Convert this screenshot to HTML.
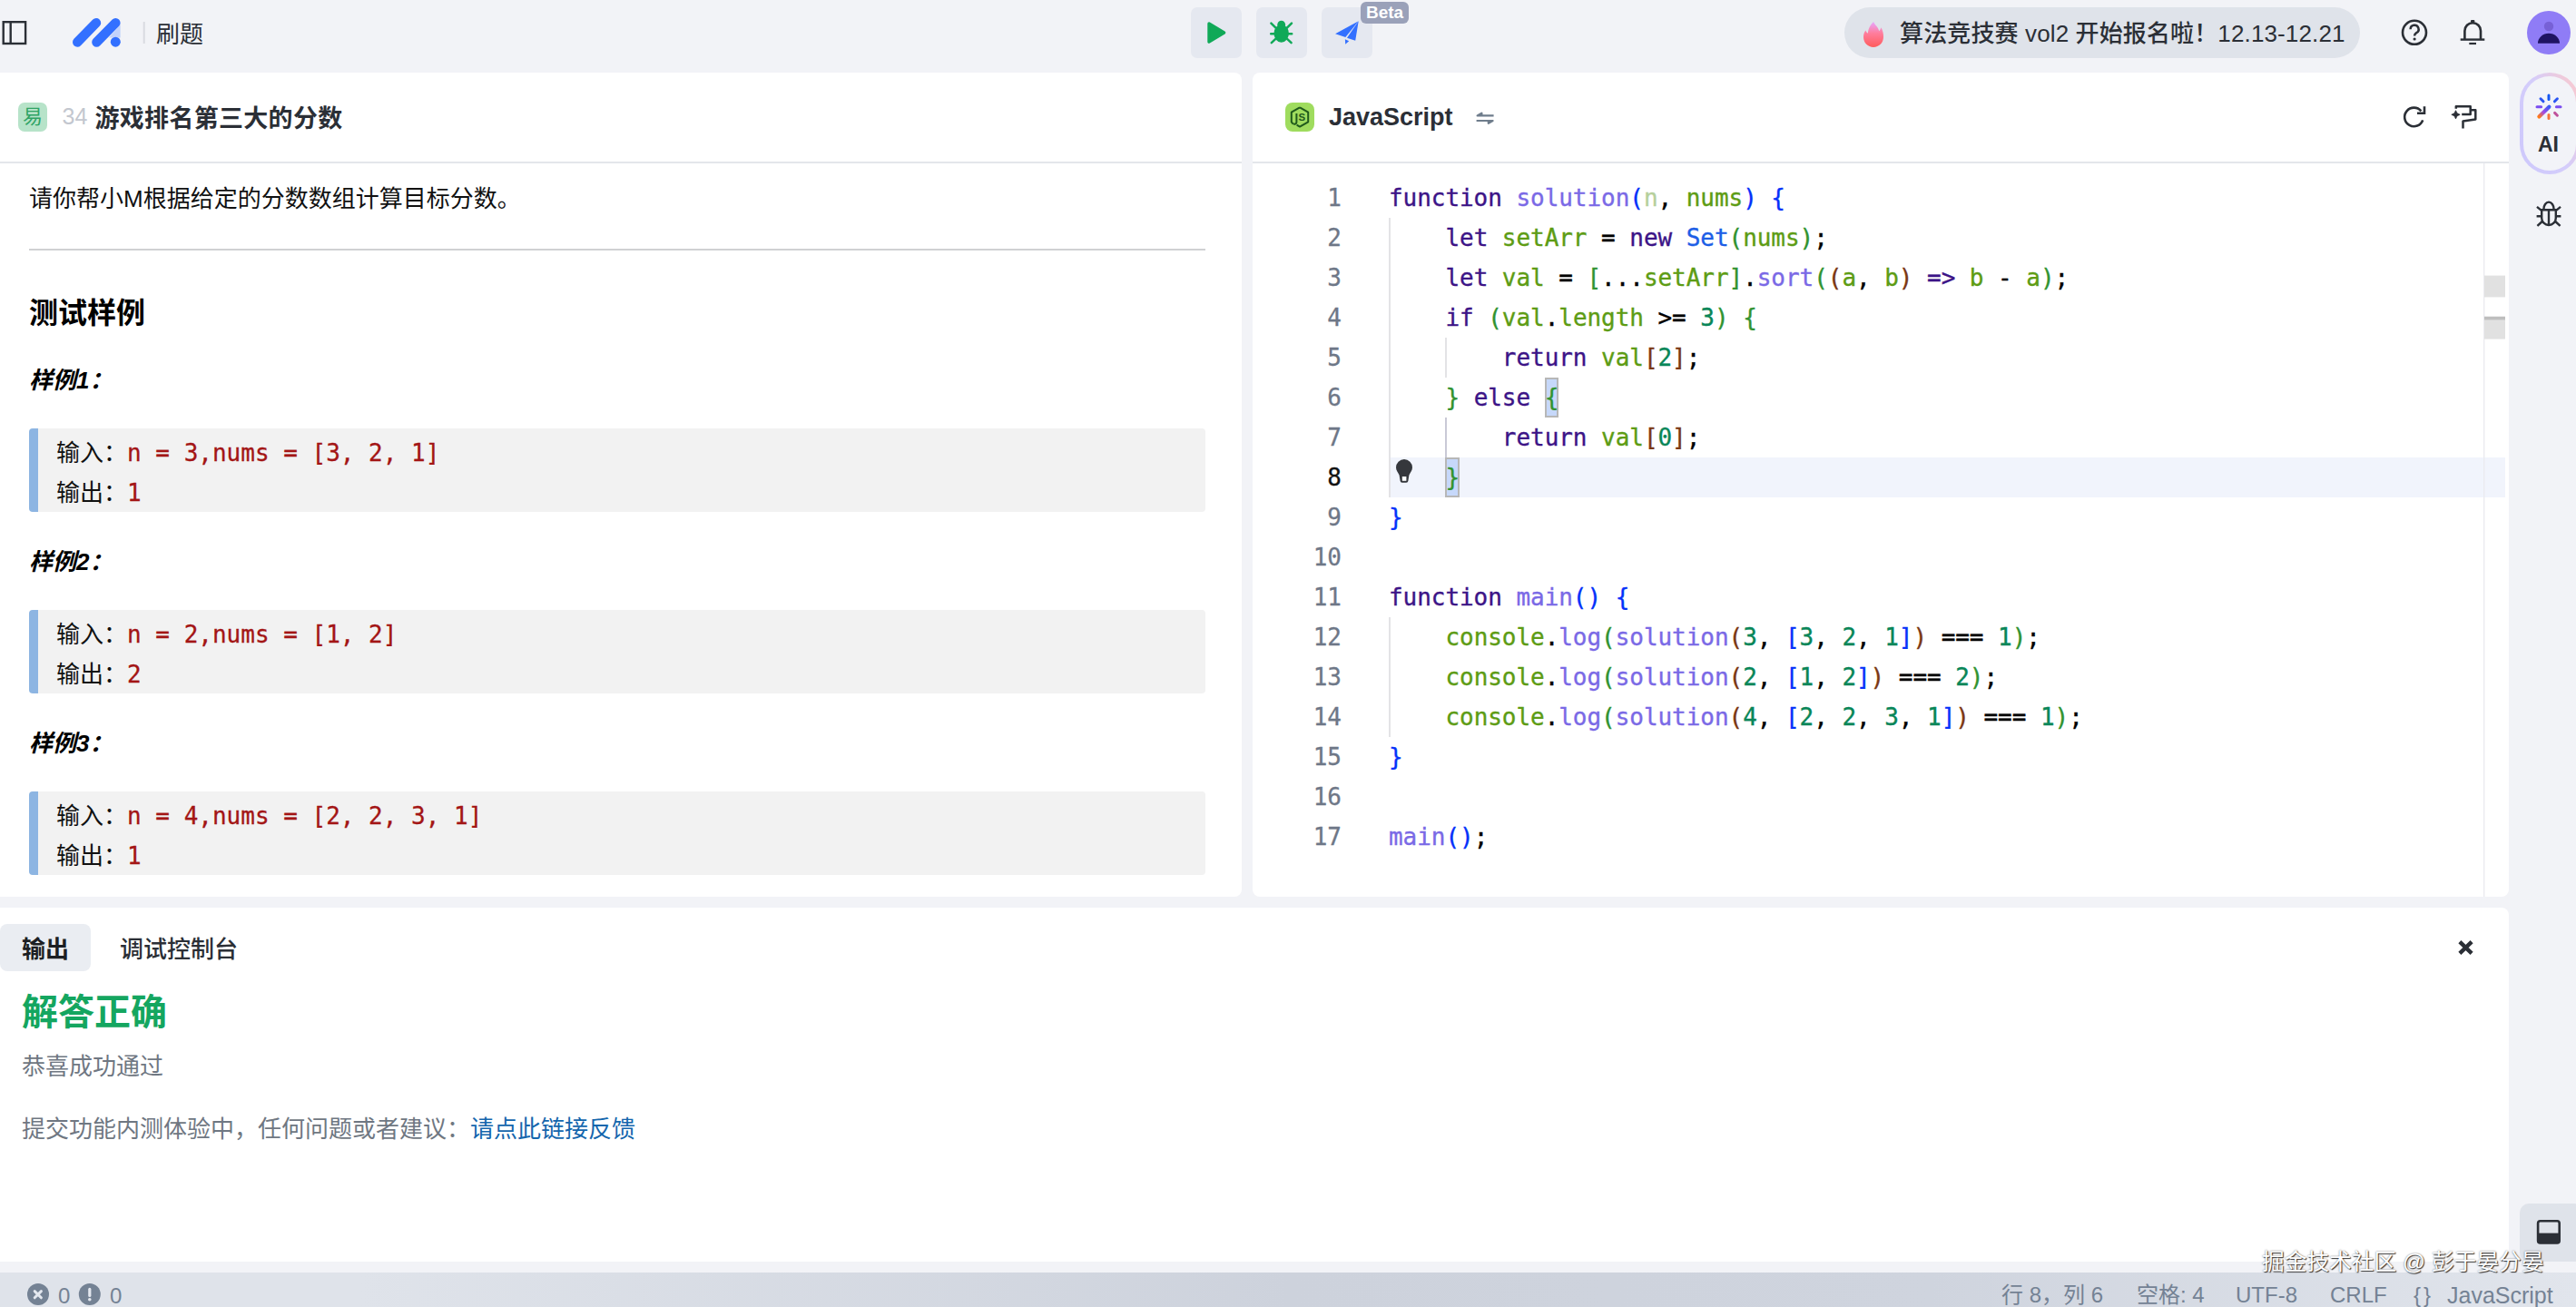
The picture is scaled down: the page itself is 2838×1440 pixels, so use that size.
<!DOCTYPE html>
<html lang="zh-CN">
<head>
<meta charset="utf-8">
<title>刷题 - 游戏排名第三大的分数</title>
<style>
*{box-sizing:border-box;margin:0;padding:0}
html,body{width:2838px;height:1440px;overflow:hidden}
body{position:relative;background:#f2f3f7;color:#2b2f36;font-family:"Liberation Sans","Noto Sans CJK SC",sans-serif;font-size:26px}
.abs{position:absolute}
.panel{position:absolute;background:#fff;border-radius:8px;overflow:hidden}
svg{display:block;position:absolute;overflow:visible}
/* top bar */
#top{position:absolute;left:0;top:0;width:2838px;height:80px}
.tbtn{position:absolute;top:8px;width:56px;height:56px;border-radius:7px;background:#e5e8f0}
#pill{position:absolute;left:2032px;top:8px;width:568px;height:56px;border-radius:28px;background:#dfe3ea}
#pilltxt{position:absolute;left:61px;top:1px;letter-spacing:0.13px;line-height:56px;font-size:26px;font-weight:500;white-space:nowrap;color:#2b2f36}
#beta{position:absolute;left:1499px;top:2px;width:53px;height:24px;border-radius:6px;background:#9aa1b9;color:#fff;font-weight:bold;font-size:19px;line-height:24px;text-align:center}
/* left panel */
#left{left:0;top:80px;width:1368px;height:908px;border-radius:0 8px 8px 0}
.hdrline{position:absolute;left:0;right:0;top:98px;height:2px;background:#e4e6eb}
#badge{position:absolute;left:20px;top:33px;width:32px;height:32px;border-radius:7px;background:#b7e3c9;color:#2fa365;font-size:22px;line-height:32px;text-align:center}
#pnum{position:absolute;left:68.5px;top:28px;font-size:25px;line-height:40px;color:#c3c7cf}
#ptitle{position:absolute;left:104.5px;top:31px;font-size:27px;line-height:40px;font-weight:bold;color:#2b2f36;white-space:nowrap;letter-spacing:0.3px}
#desc{position:absolute;left:32px;top:119px;font-size:26px;line-height:40px;color:#111;white-space:nowrap}
#hr{position:absolute;left:32px;top:194px;width:1296px;height:2px;background:#d0d1d3}
#h2{position:absolute;left:32px;top:241px;font-size:32px;line-height:48px;font-weight:bold;color:#000;white-space:nowrap}
.ex{position:absolute;left:32px;font-size:26px;line-height:40px;font-weight:bold;font-style:italic;color:#000;white-space:nowrap}
.pre{position:absolute;left:32px;width:1296px;height:92px;background:#f2f2f2;border-left:10px solid #8db5e2;border-radius:4px;padding:5px 0 0 20px;font-family:"DejaVu Sans Mono","Noto Sans CJK SC",monospace;font-size:26px;line-height:44px;color:#a31515;white-space:pre;-webkit-text-stroke:0.3px}
.pre i{font-style:normal;color:#111;-webkit-text-stroke:0}
/* right panel */
#right{left:1380px;top:80px;width:1384px;height:908px}
#jsic{position:absolute;left:36px;top:33px;width:32px;height:32px;border-radius:8px;background:#9fdc5e}
#lang{position:absolute;left:84px;top:29px;font-size:27px;line-height:40px;font-weight:bold;color:#2b2f36}
#code{position:absolute;left:0;top:116px;width:1384px;font-family:"DejaVu Sans Mono","Liberation Mono",monospace;font-size:26px;line-height:44px;white-space:pre;color:#000}
.ln{position:absolute;left:0;width:98px;text-align:right;color:#6e7787;height:44px;-webkit-text-stroke:0.3px}
.cl{position:absolute;left:150px;height:44px;letter-spacing:-0.05px;-webkit-text-stroke:0.35px}
.k{color:#3c1487}.f{color:#7a69e6}.v{color:#5d9c14}.t{color:#1c5ee6}.n{color:#098658}
.b1{color:#0431fa}.b2{color:#319331}.b3{color:#7b3814}.u{color:#b6d09c}
.bm{display:inline-block;height:44px;vertical-align:top;background:#c6d8fa;box-shadow:inset 0 0 0 2px #b7b7b7}
.guide{position:absolute;width:2px;background:#e3e3e6}
/* bottom panel */
#bottom{left:0;top:1000px;width:2764px;height:390px;border-radius:0 8px 8px 0}
#tab1{position:absolute;left:0;top:18px;padding-top:2px;width:100px;height:52px;border-radius:8px;background:#eaedf2;font-size:26px;line-height:52px;font-weight:bold;color:#1c1f23;text-align:center}
#tab2{position:absolute;left:132px;top:20px;height:52px;font-size:26px;line-height:52px;font-weight:500;color:#2b2f36;white-space:nowrap}
#ok{position:absolute;left:24px;top:85px;font-size:40px;line-height:60px;font-weight:bold;color:#14a660;white-space:nowrap}
#ok2{position:absolute;left:24px;top:155px;font-size:26px;line-height:40px;color:#6f7782;white-space:nowrap}
#ok3{position:absolute;left:24px;top:224px;font-size:26px;line-height:40px;color:#6f7782;white-space:nowrap}
#ok3 a{color:#1466ad;text-decoration:none}
/* status */
#status{position:absolute;left:0;top:1402px;width:2838px;height:38px;background:linear-gradient(90deg,#dfe3ea 0%,#dfe3ea 14%,#cdd2dc 50%,#cfd4de 75%,#e1e5ec 100%);color:#748294;font-size:24px}
#status span{position:absolute;top:7px;line-height:36px;white-space:nowrap}
#wm{position:absolute;left:2492px;top:1373px;font-size:24.7px;line-height:36px;color:#fff;white-space:nowrap;text-shadow:1px 1px 1px rgba(0,0,0,.75),0 0 2px rgba(0,0,0,.55)}
/* right sidebar */
#aipill{position:absolute;left:2776px;top:80px;width:66px;height:112px;border-radius:33px;background:linear-gradient(68deg,#cdc8fc 0%,#d4cdfb 50%,#f4cad5 88%,#f7c8d0 100%)}
#aipill:before{content:"";position:absolute;left:4px;top:4px;right:4px;bottom:4px;border-radius:29px;background:#f2f3f8}
#aitxt{position:absolute;left:2776px;top:146px;width:63px;text-align:center;font-size:23px;line-height:26px;font-weight:bold;color:#2b2f36}
#dock{position:absolute;left:2776px;top:1326px;width:70px;height:64px;border-radius:10px;background:#dfe3ea}
</style>
</head>
<body>
<!-- TOPBAR -->
<div id="top">
<svg width="2838" height="80" viewBox="0 0 2838 80" style="left:0;top:0;z-index:2">
  <defs>
    <linearGradient id="gflame" x1="0" y1="0" x2="0" y2="1"><stop offset="0" stop-color="#e7a6ff"/><stop offset="0.45" stop-color="#ff7d9c"/><stop offset="1" stop-color="#ff5c5c"/></linearGradient>
  </defs>
  <!-- sidebar toggle -->
  <rect x="3.7" y="24.2" width="24.4" height="23.8" fill="none" stroke="#2b2f36" stroke-width="2.4"/>
  <line x1="11.7" y1="24" x2="11.7" y2="48" stroke="#2b2f36" stroke-width="2.4"/>
  <!-- logo -->
  <polygon points="132.6,27 132.6,41.5 120,41.5" fill="#c2d2fb"/>
  <line x1="85.2" y1="46.5" x2="106" y2="25.2" stroke="#3370ff" stroke-width="10.4" stroke-linecap="round"/>
  <line x1="106.4" y1="46.5" x2="127.4" y2="25.2" stroke="#3370ff" stroke-width="10.4" stroke-linecap="round"/>
  <circle cx="127.3" cy="46.2" r="5.5" fill="#3370ff"/>
  <rect x="157.7" y="24" width="2" height="24" fill="#d9dbe1"/>
  <!-- play -->
  <path d="M1332,26 L1348.6,36 L1332,46 Z" fill="#10a958" stroke="#10a958" stroke-width="3.4" stroke-linejoin="round" transform="translate(0,0)"/>
  <!-- bug -->
  <g fill="#10a958" stroke="#10a958" stroke-width="2.5" stroke-linecap="round">
    <ellipse cx="1411.7" cy="36.8" rx="7" ry="8.6" />
    <circle cx="1411.7" cy="27.2" r="4.4" stroke="none"/>
    <path d="M1400.4,25.6 L1406,31.2 M1423,25.6 L1417.4,31.2 M1400.2,37.2 H1405 M1423.2,37.2 H1418.4 M1400.8,47.2 L1405.6,42.6 M1422.6,47.2 L1417.8,42.6" fill="none"/>
  </g>
  <!-- send -->
  <g fill="#3370ff">
    <path d="M1496.7,23.3 L1471.1,37.3 L1482.3,41.1 Z"/>
    <path d="M1496.7,23.3 L1493.2,44.8 L1484,41.8 Z"/>
    <path d="M1481.9,43.3 L1486.2,45.2 L1482.2,48.7 Z"/>
  </g>
  <!-- flame -->
  <g transform="translate(2053,24)">
    <path d="M11,0 C12.5,3.5 16.5,6 17.2,10.2 C18.4,9 19,7.6 19.4,6.2 C21.4,9.6 22,13 22,16.8 C22,23.3 17,28 11,28 C5,28 0,23.3 0,16.8 C0,13.8 0.9,11.4 2.4,9.4 C3,11 3.8,12 5,12.6 C5,7.6 8,3 11,0 Z" fill="url(#gflame)"/>
  </g>
  <!-- help -->
  <circle cx="2660" cy="35.8" r="13" fill="none" stroke="#2b2f36" stroke-width="2.6"/>
  <path d="M2655.6,32.2 a4.5,4.5 0 1 1 6.6,4 c-1.6,0.9 -2.1,1.7 -2.1,3.4" fill="none" stroke="#2b2f36" stroke-width="2.5"/>
  <circle cx="2660.1" cy="43" r="1.6" fill="#2b2f36"/>
  <!-- bell -->
  <path d="M2715.4,43.6 V34 a8.8,8.8 0 0 1 17.6,0 V43.6" fill="none" stroke="#2b2f36" stroke-width="2.6"/>
  <line x1="2710.7" y1="43.6" x2="2737.3" y2="43.6" stroke="#2b2f36" stroke-width="2.4"/>
  <line x1="2720.3" y1="48" x2="2728" y2="48" stroke="#2b2f36" stroke-width="2.2"/>
  <rect x="2722" y="22" width="4.4" height="3" rx="1" fill="#2b2f36"/>
  <!-- avatar -->
  <circle cx="2808" cy="36" r="24" fill="#8f7cf6"/>
  <circle cx="2808" cy="29" r="5.2" fill="#7761d6"/>
  <path d="M2796,47.8 a12,11 0 0 1 24,0 Z" fill="#1f1463"/>
</svg>
<div class="abs" style="left:172px;top:18px;font-size:26px;line-height:40px;color:#2b2f36;white-space:nowrap">刷题</div>
<div class="tbtn" style="left:1312px"></div>
<div class="tbtn" style="left:1384px"></div>
<div class="tbtn" style="left:1456px"></div>
<div id="pill"><div id="pilltxt">算法竞技赛 vol2 开始报名啦！12.13-12.21</div></div>
<div id="beta">Beta</div>
</div>
<!-- LEFT -->
<div class="panel" id="left">
<div id="badge">易</div>
<div id="pnum">34</div>
<div id="ptitle">游戏排名第三大的分数</div>
<div class="hdrline"></div>
<div id="desc">请你帮小M根据给定的分数数组计算目标分数。</div>
<div id="hr"></div>
<div id="h2">测试样例</div>
<div class="ex" style="top:319px">样例1：</div>
<div class="pre" style="top:392px"><i>输入：</i>n = 3,nums = [3, 2, 1]
<i>输出：</i>1</div>
<div class="ex" style="top:519px">样例2：</div>
<div class="pre" style="top:592px"><i>输入：</i>n = 2,nums = [1, 2]
<i>输出：</i>2</div>
<div class="ex" style="top:719px">样例3：</div>
<div class="pre" style="top:792px"><i>输入：</i>n = 4,nums = [2, 2, 3, 1]
<i>输出：</i>1</div>
</div>
<!-- RIGHT -->
<div class="panel" id="right">
<div id="jsic"></div>
<svg width="1384" height="908" viewBox="1380 80 1384 908" style="left:0;top:0;z-index:3">
  <!-- node/js icon -->
  <g fill="none" stroke="#1f5a1c" stroke-width="2" stroke-linejoin="round">
    <path d="M1432,118.4 L1441.2,123.7 V134.3 L1432,139.6 L1428.6,137.6 M1424.6,136.6 L1422.8,134.3 V123.7 L1432,118.4"/>
    <path d="M1428.4,125 V134.6 a2.2,2.2 0 0 1 -3.6,1.6"/>
  </g>
  <text x="1430.4" y="133.2" font-family="Liberation Sans, sans-serif" font-size="11.5" font-weight="bold" fill="#1f5a1c">S</text>
  <!-- swap -->
  <g fill="none" stroke="#6f7d8c" stroke-width="2.2">
    <path d="M1645.6,127.4 H1627.6 L1632.4,124.6 V127.4" fill="#6f7d8c" stroke-linejoin="round"/>
    <path d="M1626.6,133 H1644.6 L1639.8,135.8 V133" fill="#6f7d8c" stroke-linejoin="round"/>
  </g>
  <!-- refresh -->
  <g fill="none" stroke="#2b2f36" stroke-width="2.6">
    <path d="M2669.2,132.3 A10.3,10.3 0 1 1 2667.4,122.4"/>
    <path d="M2671,117.2 V124.7 H2663"/>
  </g>
  <!-- format -->
  <g fill="none" stroke="#2b2f36" stroke-width="2.5" stroke-linejoin="round">
    <path d="M2705.8,119.8 V117.3 H2721.7 V125.9 H2712.2"/>
    <path d="M2722,121.2 H2727.3 V131.4 L2713.5,133.6 V141.6"/>
    <path d="M2705.5,121.7 L2707,124.8 L2710.2,126.3 L2707,127.8 L2705.5,130.9 L2704,127.8 L2700.8,126.3 L2704,124.8 Z" fill="#2b2f36" stroke-width="0.8"/>
  </g>
  <!-- lightbulb -->
  <path d="M1547,506 a9,9 0 0 1 9,9 c0,3.6 -2.4,5.6 -3.6,8.6 l-1,6.2 a2.2,2.2 0 0 1 -2.2,2 h-4.4 a2.2,2.2 0 0 1 -2.2,-2 l-1,-6.2 c-1.2,-3 -3.600,-5 -3.600,-8.600 a9,9 0 0 1 9,-9 Z" fill="#35373c"/>
  <rect x="1544.8" y="525" width="4.6" height="4.8" fill="#fff"/>
  <!-- overview ruler -->
  <rect x="2736" y="180" width="1.4" height="808" fill="#ebebf0"/>
  <rect x="2737" y="303.6" width="23" height="23.8" fill="#e1e1e1"/>
  <rect x="2737" y="348.8" width="23" height="24.8" fill="#e1e1e1"/>
  <rect x="2737" y="348.8" width="23" height="3.6" fill="#bebebe"/>
</svg>
<div id="lang">JavaScript</div>
<div class="hdrline"></div>
<div id="code">
<div class="abs" style="left:150px;top:308px;width:1230px;height:44px;background:#f1f4fc"></div>
<div class="guide" style="left:150px;top:44px;height:308px"></div>
<div class="guide" style="left:212px;top:176px;height:44px"></div>
<div class="guide" style="left:212px;top:264px;height:44px;background:#c9c9d6"></div>
<div class="guide" style="left:150px;top:484px;height:132px"></div>
<div class="ln" style="top:0px">1</div><div class="cl" style="top:0px"><span class="k">function</span> <span class="f">solution</span><span class="b1">(</span><span class="u">n</span>, <span class="v">nums</span><span class="b1">)</span> <span class="b1">{</span></div>
<div class="ln" style="top:44px">2</div><div class="cl" style="top:44px">    <span class="k">let</span> <span class="v">setArr</span> = <span class="k">new</span> <span class="t">Set</span><span class="b2">(</span><span class="v">nums</span><span class="b2">)</span>;</div>
<div class="ln" style="top:88px">3</div><div class="cl" style="top:88px">    <span class="k">let</span> <span class="v">val</span> = <span class="b2">[</span>...<span class="v">setArr</span><span class="b2">]</span>.<span class="f">sort</span><span class="b2">(</span><span class="b3">(</span><span class="v">a</span>, <span class="v">b</span><span class="b3">)</span> <span class="k">=&gt;</span> <span class="v">b</span> - <span class="v">a</span><span class="b2">)</span>;</div>
<div class="ln" style="top:132px">4</div><div class="cl" style="top:132px">    <span class="k">if</span> <span class="b2">(</span><span class="v">val</span>.<span class="v">length</span> &gt;= <span class="n">3</span><span class="b2">)</span> <span class="b2">{</span></div>
<div class="ln" style="top:176px">5</div><div class="cl" style="top:176px">        <span class="k">return</span> <span class="v">val</span><span class="b3">[</span><span class="n">2</span><span class="b3">]</span>;</div>
<div class="ln" style="top:220px">6</div><div class="cl" style="top:220px">    <span class="b2">}</span> <span class="k">else</span> <span class="b2 bm">{</span></div>
<div class="ln" style="top:264px">7</div><div class="cl" style="top:264px">        <span class="k">return</span> <span class="v">val</span><span class="b3">[</span><span class="n">0</span><span class="b3">]</span>;</div>
<div class="ln" style="top:308px;color:#111">8</div><div class="cl" style="top:308px">    <span class="b2 bm">}</span></div>
<div class="ln" style="top:352px">9</div><div class="cl" style="top:352px"><span class="b1">}</span></div>
<div class="ln" style="top:396px">10</div><div class="cl" style="top:396px"></div>
<div class="ln" style="top:440px">11</div><div class="cl" style="top:440px"><span class="k">function</span> <span class="f">main</span><span class="b1">()</span> <span class="b1">{</span></div>
<div class="ln" style="top:484px">12</div><div class="cl" style="top:484px">    <span class="v">console</span>.<span class="f">log</span><span class="b2">(</span><span class="f">solution</span><span class="b3">(</span><span class="n">3</span>, <span class="b1">[</span><span class="n">3</span>, <span class="n">2</span>, <span class="n">1</span><span class="b1">]</span><span class="b3">)</span> === <span class="n">1</span><span class="b2">)</span>;</div>
<div class="ln" style="top:528px">13</div><div class="cl" style="top:528px">    <span class="v">console</span>.<span class="f">log</span><span class="b2">(</span><span class="f">solution</span><span class="b3">(</span><span class="n">2</span>, <span class="b1">[</span><span class="n">1</span>, <span class="n">2</span><span class="b1">]</span><span class="b3">)</span> === <span class="n">2</span><span class="b2">)</span>;</div>
<div class="ln" style="top:572px">14</div><div class="cl" style="top:572px">    <span class="v">console</span>.<span class="f">log</span><span class="b2">(</span><span class="f">solution</span><span class="b3">(</span><span class="n">4</span>, <span class="b1">[</span><span class="n">2</span>, <span class="n">2</span>, <span class="n">3</span>, <span class="n">1</span><span class="b1">]</span><span class="b3">)</span> === <span class="n">1</span><span class="b2">)</span>;</div>
<div class="ln" style="top:616px">15</div><div class="cl" style="top:616px"><span class="b1">}</span></div>
<div class="ln" style="top:660px">16</div><div class="cl" style="top:660px"></div>
<div class="ln" style="top:704px">17</div><div class="cl" style="top:704px"><span class="f">main</span><span class="b1">()</span>;</div>
</div>
</div>
<!-- BOTTOM -->
<div class="panel" id="bottom">
<div id="tab1">输出</div>
<div id="tab2">调试控制台</div>
<div id="ok">解答正确</div>
<div id="ok2">恭喜成功通过</div>
<div id="ok3">提交功能内测体验中，任何问题或者建议：<a>请点此链接反馈</a></div>
</div>
<!-- STATUS -->
<div id="status">
<span style="left:64px;top:8px">0</span><span style="left:121px;top:8px">0</span>
<span style="left:2205px">行 8，列 6</span><span style="left:2354px">空格: 4</span><span style="left:2463px">UTF-8</span><span style="left:2567px">CRLF</span><span style="left:2659px;letter-spacing:3px">{}</span><span style="left:2696px;font-size:25px">JavaScript</span>
</div>
<!-- SIDEBAR -->
<div id="aipill"></div>
<div id="aitxt">AI</div>
<div id="dock"></div>
<svg width="2838" height="1440" viewBox="0 0 2838 1440" style="left:0;top:0;z-index:5;pointer-events:none">
  <defs>
    <linearGradient id="gwand" x1="0" y1="1" x2="1" y2="0"><stop offset="0" stop-color="#ff7a1a"/><stop offset="0.45" stop-color="#a04be8"/><stop offset="1" stop-color="#3b5cf5"/></linearGradient>
  </defs>
  <!-- ai sparkle -->
  <g fill="none" stroke-width="3" stroke-linecap="round">
    <line x1="2808" y1="105" x2="2808" y2="109.6" stroke="#1557f0"/>
    <line x1="2799" y1="108.8" x2="2802" y2="111.8" stroke="#2a55f2"/>
    <line x1="2817.4" y1="108.8" x2="2814.4" y2="111.8" stroke="#2a55f2"/>
    <line x1="2795" y1="117.8" x2="2799.600" y2="117.8" stroke="#7a4df0"/>
    <line x1="2816.4" y1="117.800" x2="2821" y2="117.8" stroke="#7a4df0"/>
    <line x1="2814.6" y1="124.4" x2="2817.4" y2="127.2" stroke="#c0509a"/>
    <line x1="2808" y1="126.4" x2="2808" y2="130.6" stroke="#f5743a"/>
    <line x1="2797.4" y1="128.600" x2="2808.4" y2="117.800" stroke="url(#gwand)" stroke-width="4.2"/>
  </g>
  <!-- bug outline -->
  <g fill="none" stroke="#2b2f36" stroke-width="2.4">
    <path d="M2800.2,231.200 H2815.800 V240.2 a7.800,7.800 0 0 1 -15.600,0 Z"/>
    <path d="M2802.4,230.6 a5.600,8 0 0 1 11.200,0"/>
    <path d="M2808,232 V247.6"/>
    <path d="M2795,227.800 L2800.2,232.2 M2821,227.800 L2815.800,232.2 M2794.6,238.2 H2800 M2821.400,238.2 H2816 M2795.400,248.8 L2800.800,244 M2820.600,248.800 L2815.200,244"/>
  </g>
  <!-- dock icon -->
  <rect x="2796.100" y="1345.300" width="23.600" height="24.200" rx="2.5" fill="none" stroke="#2b2f36" stroke-width="2.600"/>
  <rect x="2796" y="1358.600" width="24" height="11" fill="#2b2f36"/>
  <!-- close x -->
  <path d="M2709.900,1037.600 L2723.100,1050.300 M2723.100,1037.600 L2709.900,1050.300" stroke="#2b2f36" stroke-width="4.4" fill="none"/>
  <!-- status icons -->
  <circle cx="42" cy="1426" r="12" fill="#748294"/>
  <path d="M38.200,1422.600 L45.400,1429.800 M45.400,1422.600 L38.200,1429.800" stroke="#e3e7ee" stroke-width="3" stroke-linecap="round"/>
  <circle cx="98.800" cy="1426" r="12" fill="#748294"/>
  <path d="M98.800,1420.400 V1427.400" stroke="#e3e7ee" stroke-width="3.200" stroke-linecap="round"/>
  <circle cx="98.800" cy="1431.800" r="1.800" fill="#e3e7ee"/>
</svg>
<div id="wm">掘金技术社区 @ 彭于晏分晏</div>
</body>
</html>
